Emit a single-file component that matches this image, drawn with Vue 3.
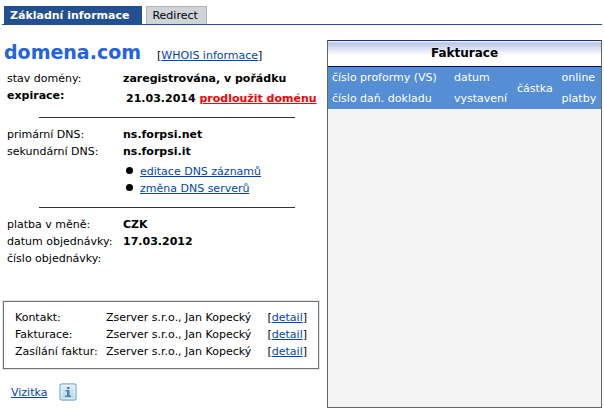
<template>
  <div class="page">
    <nav class="tabs">
      <a href="#info" class="tab active">Základní informace</a>
      <a href="#redirect" class="tab">Redirect</a>
    </nav>

    <main class="columns">
      <section class="domain">
        <header class="domain-header">
          <h1 class="domain-name">domena.com</h1>
          <span>[<a href="#whois">WHOIS informace</a>]</span>
        </header>

        <table class="details">
          <tbody>
            <tr>
              <th scope="row">stav domény:</th>
              <td>zaregistrována, v pořádku</td>
            </tr>
            <tr>
              <th scope="row" class="strong">expirace:</th>
              <td class="expiration">21.03.2014 <a href="#renew" class="renew">prodloužit doménu</a></td>
            </tr>
          </tbody>
        </table>

        <hr class="divider">

        <table class="details">
          <tbody>
            <tr v-for="server in servers" :key="server.label">
              <th scope="row">{{ server.label }}</th>
              <td>{{ server.value }}</td>
            </tr>
          </tbody>
        </table>
        <ul class="dns-links">
          <li><a href="#dns-records">editace DNS záznamů</a></li>
          <li><a href="#dns-servers">změna DNS serverů</a></li>
        </ul>

        <hr class="divider">

        <table class="details">
          <tbody>
            <tr v-for="item in order" :key="item.label">
              <th scope="row">{{ item.label }}</th>
              <td>{{ item.value }}</td>
            </tr>
          </tbody>
        </table>

        <div class="contacts">
          <table class="contacts-table">
            <tbody>
              <tr v-for="contact in contacts" :key="contact.label">
                <th scope="row">{{ contact.label }}</th>
                <td>{{ contact.name }}</td>
                <td>[<a href="#detail">detail</a>]</td>
              </tr>
            </tbody>
          </table>
        </div>

        <footer class="card-link">
          <a href="#vizitka">Vizitka</a>
          <svg class="info-icon" viewBox="0 0 18 18" aria-hidden="true">
            <defs>
              <linearGradient id="info-bg" x1="0" y1="0" x2="0" y2="1">
                <stop offset="0" stop-color="#e2f0f8" />
                <stop offset="1" stop-color="#b5d5e9" />
              </linearGradient>
            </defs>
            <rect x="1" y="1" width="16" height="16" rx="2" fill="url(#info-bg)" stroke="#86b4d2" stroke-width="1.4" />
            <rect x="2.2" y="2.2" width="13.6" height="13.6" rx="1" fill="none" stroke="#eef7fc" stroke-width="0.8" />
            <path d="M8 4h2.5v2H8zM6.5 7h4v5.5H12V14H6v-1.500h2v-4H6.500z" fill="#4585ae" />
          </svg>
        </footer>
      </section>

      <section class="billing">
        <h2 class="billing-title">Fakturace</h2>
        <table class="billing-table">
          <thead>
            <tr>
              <th scope="col" class="col-number">číslo proformy (VS)<br>číslo daň. dokladu</th>
              <th scope="col" class="col-date">datum<br>vystavení</th>
              <th scope="col">částka</th>
              <th scope="col">online<br>platby</th>
            </tr>
          </thead>
        </table>
      </section>
    </main>
  </div>
</template>

<script setup>
const servers = [
  { label: 'primární DNS:', value: 'ns.forpsi.net' },
  { label: 'sekundární DNS:', value: 'ns.forpsi.it' }
]

const order = [
  { label: 'platba v měně:', value: 'CZK' },
  { label: 'datum objednávky:', value: '17.03.2012' },
  { label: 'číslo objednávky:', value: '' }
]

const contacts = [
  { label: 'Kontakt:', name: 'Zserver s.r.o., Jan Kopecký' },
  { label: 'Fakturace:', name: 'Zserver s.r.o., Jan Kopecký' },
  { label: 'Zasílání faktur:', name: 'Zserver s.r.o., Jan Kopecký' }
]
</script>

<style>
body {
  background-color: #ffffff;
}
</style>

<style scoped>
.page {
  padding: 6px 2px 4px;
  color: #000000;
  font-family: 'DejaVu Sans', Verdana, sans-serif;
  font-size: 11px;
  line-height: 17px;
}

a {
  color: #0046ad;
}

.tabs {
  display: flex;
  gap: 4px;
  padding-left: 2px;
  border-bottom: 1px solid #225091;
}

.tab {
  padding: 0 8px 0 5px;
  border: 1px solid #b0b4ba;
  border-bottom: none;
  background-color: #d0d3d8;
  color: #000000;
  text-decoration: none;
}

.tab.active {
  padding-right: 12px;
  border-color: #225091;
  background-color: #225091;
  color: #ffffff;
  font-weight: bold;
}

.columns {
  display: grid;
  grid-template-columns: 325fr 275fr;
  padding-top: 15px;
}

.domain {
  min-width: 0;
}

.domain-header {
  display: flex;
  align-items: baseline;
  gap: 16px;
  padding-left: 2px;
  margin-bottom: 6px;
}

.domain-name {
  margin: 0;
  color: #2264e0;
  font-size: 19px;
  line-height: 24px;
}

.details,
.contacts-table {
  border-collapse: collapse;
}

.details {
  width: 100%;
  margin-left: 5px;
}

.details th,
.details td,
.contacts-table th,
.contacts-table td {
  padding: 0;
  text-align: left;
  vertical-align: top;
  white-space: nowrap;
}

.details th,
.contacts-table th {
  font-weight: normal;
}

.details th {
  width: 116px;
}

.details td,
.details .strong {
  font-weight: bold;
}

.details .expiration {
  padding: 3px 0 0 3px;
}

.details .renew {
  color: #ff0000;
}

.divider {
  height: 1px;
  margin: 10px 32px 8px 37px;
  border: none;
  background-color: #333333;
}

.dns-links {
  margin: 3px 0 0 121px;
  padding-left: 17px;
  list-style: none;
}

.dns-links li::before {
  content: '';
  float: left;
  width: 7px;
  height: 7px;
  margin: 4px 0 0 -14px;
  border-radius: 50%;
  background-color: #000000;
}

.contacts {
  margin: 34px 8px 0 1px;
  padding: 7px 11px 8px;
  border: 1px solid #737373;
  outline: 1px solid #e4e4e4;
}

.contacts-table {
  width: 100%;
}

.contacts-table th {
  width: 91px;
}

.contacts-table td:last-child {
  text-align: right;
}

.card-link {
  display: flex;
  align-items: center;
  gap: 12px;
  padding: 14px 0 7px 9px;
}

.info-icon {
  width: 18px;
  height: 18px;
}

.billing {
  border: 1px solid #666666;
  border-top-color: #163082;
  background-color: #f4f4f4;
}

.billing-title {
  margin: 0;
  border-bottom: 1px solid #001060;
  background: linear-gradient(#ffffff 0, #b8c5e6 2px, #ffffff 14px);
  font-size: 12px;
  line-height: 25px;
  text-align: center;
}

.billing-table {
  width: 100%;
  border-collapse: collapse;
  background-color: #558ed5;
  color: #ffffff;
}

.billing-table th {
  padding: 0 4px;
  font-weight: normal;
  line-height: 21px;
  text-align: left;
  vertical-align: middle;
  white-space: nowrap;
}

.billing-table .col-number {
  width: 114px;
}

.billing-table .col-date {
  width: 55px;
}
</style>
